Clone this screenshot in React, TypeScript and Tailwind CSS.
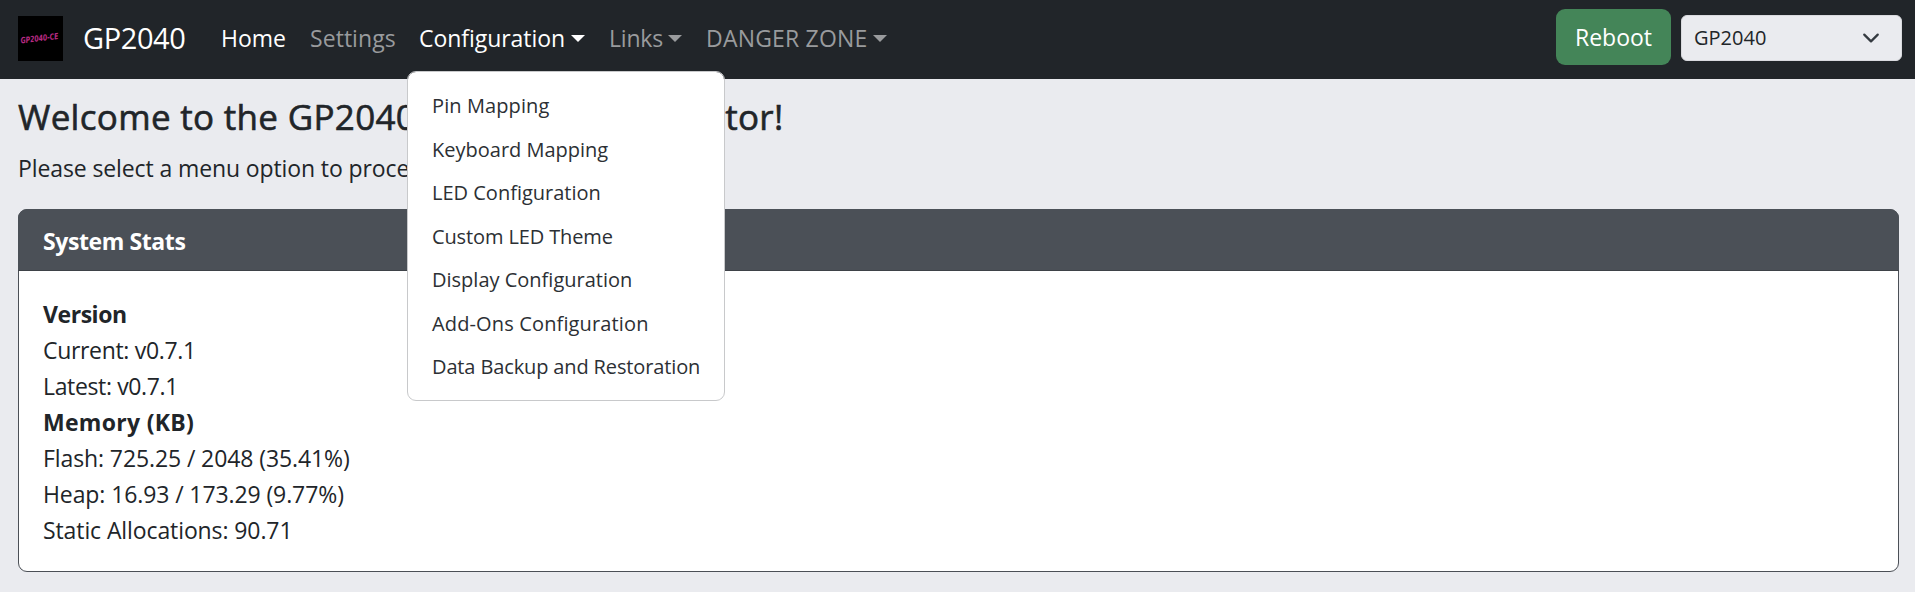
const navText = 'text-[23px] leading-9 whitespace-nowrap';

function Caret() {
  return (
    <svg viewBox="0 0 14 7" className="h-[7px] w-[14px] shrink-0 fill-current">
      <path d="M0 0H14L7 7Z" />
    </svg>
  );
}

function Logo() {
  return (
    <svg viewBox="0 0 45 45" className="size-[45px] shrink-0 bg-black">
      <text
        x="3"
        y="27.5"
        textLength="38"
        lengthAdjust="spacingAndGlyphs"
        transform="rotate(-7 3 27.5)"
        className="fill-[#b82a83] text-[8.5px] font-bold italic [font-family:'DejaVu_Sans',sans-serif]"
      >
        GP2040-CE
      </text>
    </svg>
  );
}

const menu = [
  { label: 'Pin Mapping', tracking: 'tracking-[0.1px]' },
  { label: 'Keyboard Mapping', tracking: 'tracking-[0px]' },
  { label: 'LED Configuration', tracking: 'tracking-[0px]' },
  { label: 'Custom LED Theme', tracking: 'tracking-[-0.12px]' },
  { label: 'Display Configuration', tracking: 'tracking-[0px]' },
  { label: 'Add-Ons Configuration', tracking: 'tracking-[0.14px]' },
  { label: 'Data Backup and Restoration', tracking: 'tracking-[-0.13px]' },
];

function ConfigurationMenu() {
  return (
    <div className="absolute top-[71px] left-[407px] z-10 h-[330px] w-[318px] rounded-[9px] border border-[#c8c9cb] bg-white bg-clip-padding pt-[12px] pl-6">
      {menu.map((item) => (
        <a
          key={item.label}
          className={`block h-[43.5px] text-[20px] leading-[43.5px] whitespace-nowrap text-[#2c3034] ${item.tracking}`}
        >
          {item.label}
        </a>
      ))}
    </div>
  );
}

function Navbar() {
  return (
    <nav className="flex h-[79px] items-center bg-[#212529] pr-[13px] pb-[3px] pl-[18px] text-white">
      <Logo />
      <span className="ml-[20px] w-[138px] text-[29px] tracking-[-0.4px]">GP2040</span>
      <a className={`w-[89px] ${navText}`}>Home</a>
      <a className={`w-[109px] tracking-[0.05px] text-[#999b9d] ${navText}`}>Settings</a>
      <a className={`flex w-[190px] items-center tracking-[-0.05px] ${navText}`}>
        <span className="w-[152px]">Configuration</span>
        <Caret />
      </a>
      <a className={`flex w-[97px] items-center tracking-[-0.2px] text-[#999b9d] ${navText}`}>
        <span className="w-[59px]">Links</span>
        <Caret />
      </a>
      <a className={`flex items-center tracking-[0.2px] text-[#999b9d] ${navText}`}>
        <span className="w-[167px]">DANGER ZONE</span>
        <Caret />
      </a>
      <button className="mb-[2px] ml-auto h-14 w-[115px] rounded-[9px] bg-[#448558] text-[23px] leading-9">
        Reboot
      </button>
      <div className="ml-[10px] flex h-[46px] w-[221px] items-center justify-between rounded-[6px] border border-[#d9dade] bg-[#eaebef] pr-[21px] pl-[12px] text-[#212529]">
        <span className="text-[20px]">GP2040</span>
        <svg viewBox="0 0 16 16" className="size-[18px] fill-none stroke-[#343a40] stroke-2">
          <path strokeLinecap="round" strokeLinejoin="round" d="m2 5 6 6 6-6" />
        </svg>
      </div>
    </nav>
  );
}

const stats = [
  { text: 'Version', style: 'font-bold tracking-[-0.45px]' },
  { text: 'Current: v0.7.1', style: 'tracking-[-0.32px]' },
  { text: 'Latest: v0.7.1', style: 'tracking-[-0.36px]' },
  { text: 'Memory (KB)', style: 'font-bold tracking-[0.3px]' },
  { text: 'Flash: 725.25 / 2048 (35.41%)', style: 'tracking-[-0.1px]' },
  { text: 'Heap: 16.93 / 173.29 (9.77%)', style: 'tracking-[-0.1px]' },
  { text: 'Static Allocations: 90.71', style: 'tracking-[-0.1px]' },
];

export default function App() {
  return (
    <div className="relative h-[592px] overflow-hidden bg-[#eaebef] text-[#212529] [font-family:'Open_Sans','Noto_Sans',sans-serif]">
      <Navbar />
      <ConfigurationMenu />
      <main className="pt-4 pr-4 pl-[18px]">
        <h1 className="mb-3 text-[35px] leading-[43px] font-medium tracking-[0.31px] [-webkit-text-stroke:0.6px_#212529]">
          Welcome to the GP2040-CE Web Configurator!
        </h1>
        <p className="mb-[23px] text-[23px] leading-9 tracking-[-0.11px]">
          Please select a menu option to proceed.
        </p>
        <section className="h-[363px] rounded-[9px] border border-[#4b4f56] bg-white">
          <h2 className="-mx-px -mt-px h-[62px] rounded-t-[9px] border-b border-[#3e4248] bg-[#4b5057] pt-[14px] pl-[25px] text-[23px] leading-9 font-bold tracking-[-0.4px] text-white">
            System Stats
          </h2>
          <div className="pt-[25px] pl-6">
            {stats.map((line) => (
              <p key={line.text} className={`text-[23px] leading-9 ${line.style}`}>
                {line.text}
              </p>
            ))}
          </div>
        </section>
      </main>
    </div>
  );
}
